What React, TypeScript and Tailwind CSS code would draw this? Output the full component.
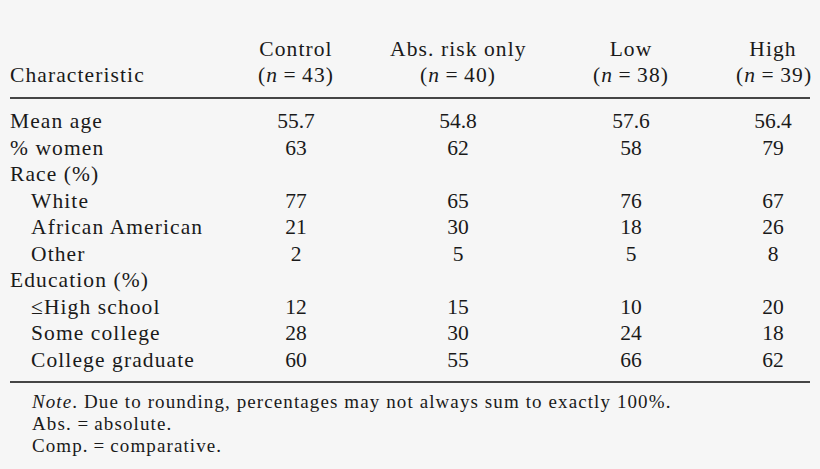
const groups = [
  { name: "Control", n: "43" },
  { name: "Abs. risk only", n: "40" },
  { name: "Low", n: "38" },
  { name: "High", n: "39" },
];

const rows: { label: string; indent?: boolean; values?: string[] }[] = [
  { label: "Mean age", values: ["55.7", "54.8", "57.6", "56.4"] },
  { label: "% women", values: ["63", "62", "58", "79"] },
  { label: "Race (%)" },
  { label: "White", indent: true, values: ["77", "65", "76", "67"] },
  { label: "African American", indent: true, values: ["21", "30", "18", "26"] },
  { label: "Other", indent: true, values: ["2", "5", "5", "8"] },
  { label: "Education (%)" },
  { label: "\u2264High school", indent: true, values: ["12", "15", "10", "20"] },
  { label: "Some college", indent: true, values: ["28", "30", "24", "18"] },
  { label: "College graduate", indent: true, values: ["60", "55", "66", "62"] },
];

const grid = "grid grid-cols-[192px_188px_136px_210px_74px]";

export default function App() {
  return (
    <div className="w-[820px] h-[469px] bg-[#f6f6f6] text-[#1a1a1a] font-['Liberation_Serif','Times_New_Roman',serif] overflow-hidden">
      <div className="w-[800px] ml-[10px] pt-[36px]">
        {/* header */}
        <div className={`${grid} text-[21.5px] leading-[26px] tracking-[1.1px] pb-[9px]`}>
          <div className="self-end">Characteristic</div>
          {groups.map((g) => (
            <div key={g.name} className="text-center whitespace-nowrap">
              <div>{g.name}</div>
              <div>
                (<i>n</i>&thinsp;=&thinsp;{g.n})
              </div>
            </div>
          ))}
        </div>
        <div className="h-[2px] bg-[#454545]" />

        {/* body */}
        <div className="pt-[9px] pb-[8px] text-[21.5px] leading-[26.55px]">
          {rows.map((r) => (
            <div key={r.label} className={grid}>
              <div className={`whitespace-nowrap tracking-[1.1px] ${r.indent ? "pl-[21px]" : ""}`}>{r.label}</div>
              {(r.values ?? ["", "", "", ""]).map((v, i) => (
                <div key={i} className="text-center">
                  {v}
                </div>
              ))}
            </div>
          ))}
        </div>
        <div className="h-[2px] bg-[#454545]" />

        {/* notes */}
        <div className="pl-[22px] pt-[8px] text-[19px] leading-[22px] tracking-[1.1px] whitespace-nowrap">
          <div>
            <i>Note</i>. Due to rounding, percentages may not always sum to exactly 100%.
          </div>
          <div>Abs. =&thinsp;absolute.</div>
          <div>Comp.&thinsp;=&thinsp;comparative.</div>
        </div>
      </div>
    </div>
  );
}
